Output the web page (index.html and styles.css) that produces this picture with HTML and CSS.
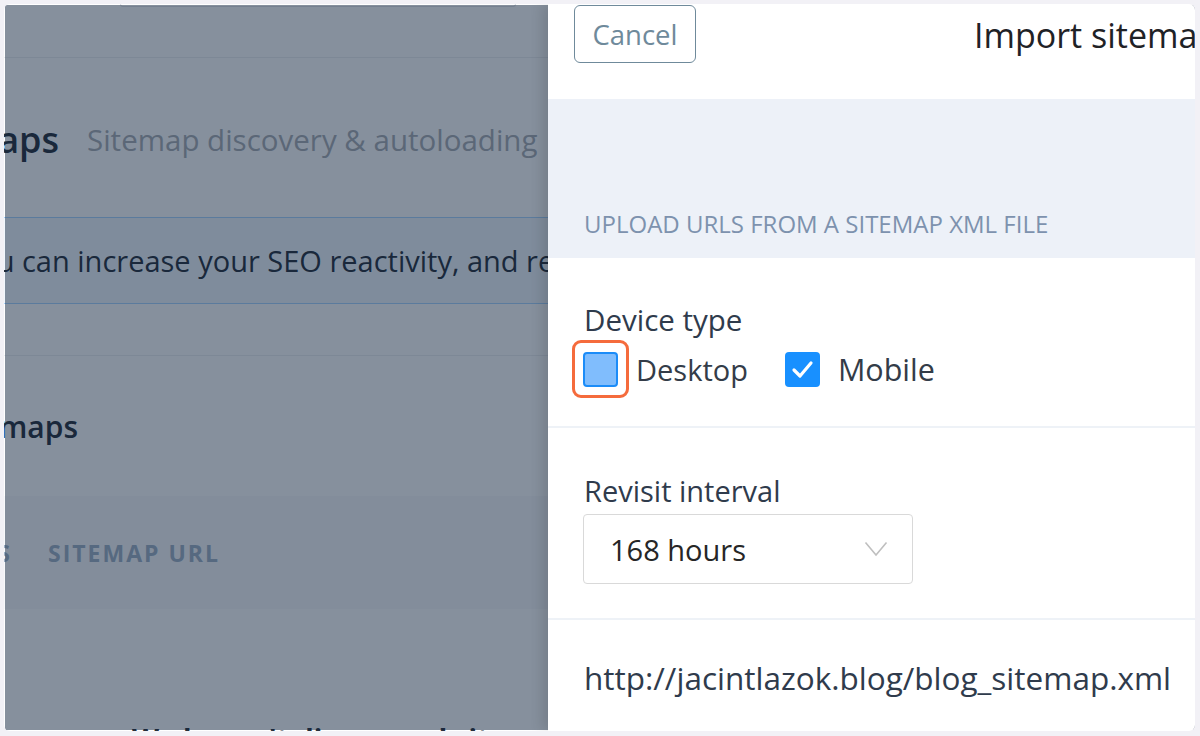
FILE: index.html
```html
<!DOCTYPE html>
<html lang="en">
<head>
  <meta charset="UTF-8" />
  <title>Import sitemap</title>
  <meta name="viewport" content="width=device-width, initial-scale=1.0" />
  <link rel="stylesheet" href="styles.css">
</head>
<body>

  <div class="screen">

    <!-- page behind the drawer -->
    <div class="app">
      <div class="topbar">
        <div class="search"></div>
      </div>

      <div class="page-head">
        <div class="crop-end head-crop"><h1>Sitemaps</h1></div>
        <span class="subtitle">Sitemap discovery &amp; autoloading</span>
      </div>

      <div class="info">You can increase your SEO reactivity, and reduce the delay before changes are visible</div>

      <div class="sitemaps">
        <div class="crop-end h2-crop"><h2>Sitemaps</h2></div>
        <div class="table-head">
          <div class="crop-end th-crop"><span>Devices</span></div>
          <span>Sitemap URL</span>
        </div>
        <div class="empty">We haven't discovered sitemaps yet</div>
      </div>
    </div>

    <div class="mask"></div>

    <!-- drawer -->
    <aside class="drawer">
      <div class="drawer-head">
        <button class="btn-cancel">Cancel</button>
        <h3>Import sitemap</h3>
      </div>

      <div class="band">Upload URLs from a sitemap XML file</div>

      <div class="field">
        <label class="field-label">Device type</label>
        <div class="checks">
          <label class="check">
            <span class="box box-focus"><span class="ring"></span></span>
            Desktop
          </label>
          <label class="check">
            <span class="box box-on">
              <svg width="35" height="35" viewBox="0 0 35 35"><path d="M9 18 L15 24 L26 11" fill="none" stroke="#fff" stroke-width="3.2" stroke-linecap="round" stroke-linejoin="round"/></svg>
            </span>
            Mobile
          </label>
        </div>
      </div>

      <div class="field field-interval">
        <label class="field-label">Revisit interval</label>
        <div class="select">
          <span>168 hours</span>
          <svg width="24" height="16" viewBox="0 0 24 16"><path d="M1.5 1.5 L12 14 L22.5 1.5" fill="none" stroke="#bfbfbf" stroke-width="1.6"/></svg>
        </div>
      </div>

      <div class="field field-url">http://jacintlazok.blog/blog_sitemap.xml</div>
    </aside>

  </div>

</body>
</html>
```

FILE: styles.css
```css
body {
  margin: 0;
  background: #f2f1f6;
  font-family: "Open Sans", "Noto Sans", sans-serif;
  overflow: hidden;
}

.screen {
  position: relative;
  margin: 4px;
  width: 1191px;
  height: 727px;
  border-radius: 6px;
  overflow: hidden;
  background: #fff;
}

/* ---------- page behind ---------- */

.app {
  color: #262f3a;
}

.topbar {
  height: 53px;
  border-bottom: 1px solid #eceef1;
  position: relative;
}

.search {
  margin-left: 116px;
  width: 394px;
  height: 2px;
  border: 1px solid #dcdfe4;
  border-top: none;
  border-radius: 0 0 6px 6px;
}

.page-head {
  height: 159px;
  display: flex;
  align-items: center;
  gap: 28px;
  padding-top: 4px;
  box-sizing: border-box;
}

.crop-end {
  display: flex;
  justify-content: flex-end;
  white-space: nowrap;
  flex-shrink: 0;
}

.head-crop {
  width: 55px;
}

h1 {
  margin: 0;
  font-size: 36px;
  font-weight: 600;
}

.subtitle {
  font-size: 29.5px;
  color: #a9adb3;
  white-space: nowrap;
}

.info {
  height: 85px;
  line-height: 85px;
  background: #f1f7fd;
  border-top: 1px solid #a8d4ff;
  border-bottom: 1px solid #a8d4ff;
  font-size: 29px;
  white-space: nowrap;
  margin-left: -41px;
}

.sitemaps {
  margin-top: 51px;
  border-top: 1px solid #eceef1;
}

.h2-crop {
  width: 74px;
  height: 140px;
  align-items: center;
}

h2 {
  margin: 0;
  font-size: 30px;
  font-weight: 600;
}

.table-head {
  height: 113px;
  display: flex;
  align-items: center;
  gap: 36px;
  background: #f8f9fb;
  font-size: 23px;
  font-weight: 700;
  letter-spacing: 2px;
  text-transform: uppercase;
  color: #9fb0c4;
}

.th-crop {
  width: 8px;
}

.empty {
  margin-top: 111px;
  padding-left: 128px;
  font-size: 28px;
  font-weight: 700;
  white-space: nowrap;
}

.mask {
  position: absolute;
  top: 1px;
  left: 1px;
  right: 0;
  bottom: 1px;
  background: rgba(13, 33, 59, 0.5);
}

/* ---------- drawer ---------- */

.drawer {
  position: absolute;
  top: 0;
  bottom: 0;
  left: 544px;
  width: 820px;
  background: #fff;
  box-shadow: -6px 0 12px rgba(0, 0, 0, 0.12);
  color: #2f3b4c;
}

.drawer-head {
  height: 95px;
  display: flex;
  align-items: flex-start;
  padding: 1px 0 0 26px;
  box-sizing: border-box;
}

.btn-cancel {
  width: 122px;
  height: 58px;
  border: 1px solid #6f8a9b;
  border-radius: 6px;
  background: #fff;
  color: #6f8a9b;
  font-family: inherit;
  font-size: 27.5px;
  cursor: pointer;
}

.drawer-head h3 {
  margin: 0 0 0 278px;
  font-size: 34px;
  font-weight: 500;
  line-height: 60px;
  color: #1f2226;
  white-space: nowrap;
}

.band {
  height: 159px;
  background: #edf1f8;
  padding: 110px 0 0 36px;
  box-sizing: border-box;
  font-size: 24px;
  line-height: 30px;
  text-transform: uppercase;
  color: #7d92ae;
}

.field {
  padding: 42px 0 0 36px;
  height: 170px;
  box-sizing: border-box;
  border-bottom: 2px solid #eef2f7;
  font-size: 29.5px;
}

.field-label {
  display: block;
  line-height: 40px;
}

.checks {
  display: flex;
  align-items: center;
  gap: 37px;
  margin-top: 8px;
  font-size: 29px;
}

.check {
  display: flex;
  align-items: center;
  gap: 18px;
  color: #333c48;
}

.check:last-child {
  font-size: 30.5px;
}

.box {
  position: relative;
  width: 35px;
  height: 35px;
  border-radius: 4px;
  box-sizing: border-box;
}

.box-focus {
  background: #80bdfd;
  border: 2px solid #1b8cf8;
  margin-left: -1px;
}

.box-on {
  background: #1890ff;
}

.box-on svg {
  display: block;
}

/* orange highlight drawn over the desktop box */
.ring {
  position: absolute;
  top: -14px;
  left: -13px;
  right: -13px;
  bottom: -13px;
  border: 3px solid #f56b3c;
  border-radius: 9px;
}

.field-interval {
  padding-top: 43px;
  height: 192px;
  font-size: 29px;
}

.select {
  margin-top: 3px;
  margin-left: -1px;
  width: 330px;
  height: 70px;
  border: 1px solid #d9d9d9;
  border-radius: 4px;
  box-sizing: border-box;
  display: flex;
  align-items: center;
  justify-content: space-between;
  padding: 0 24px 0 26px;
  color: #262626;
}

.field-url {
  border-bottom: none;
  padding-top: 38px;
  line-height: 40px;
  font-size: 31.5px;
}
```
